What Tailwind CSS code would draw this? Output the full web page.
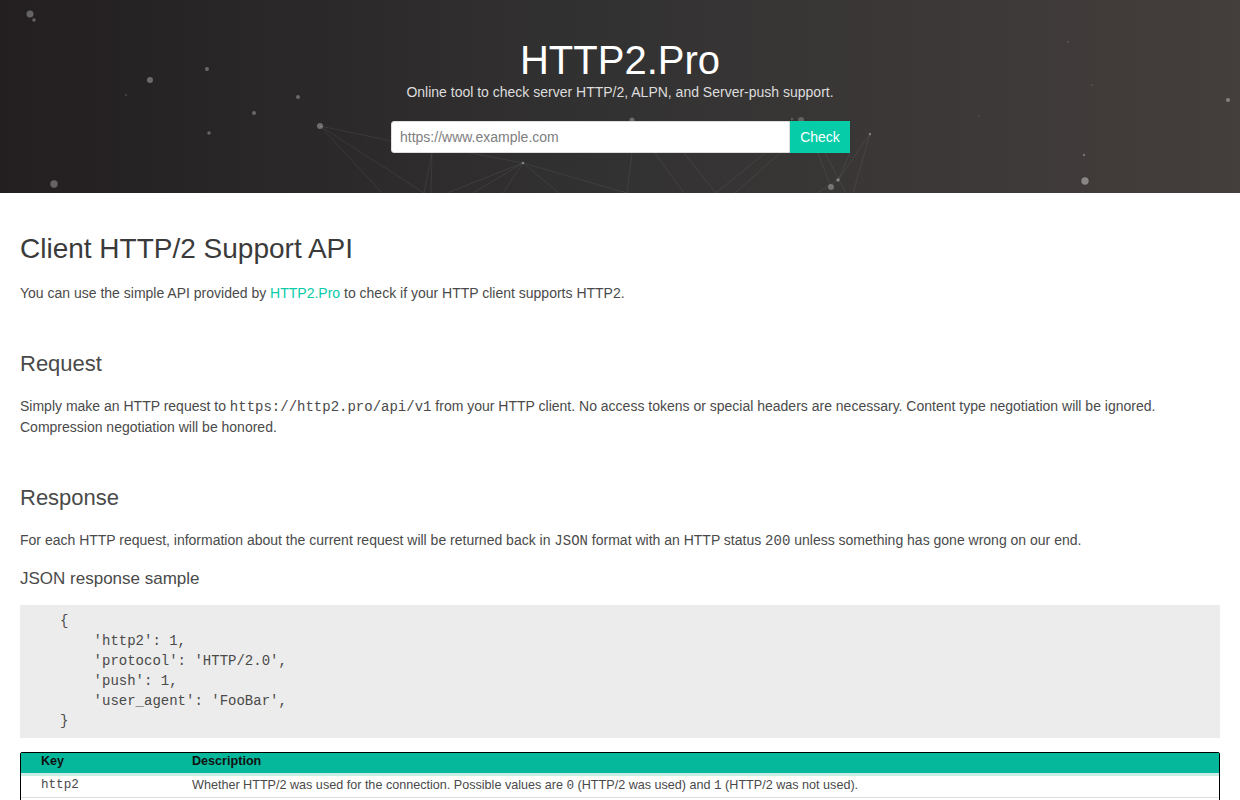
<!DOCTYPE html>
<html lang="en">
<head>
    <meta charset="UTF-8">
    <meta name="viewport" content="width=device-width, initial-scale=1.0">
    <title>HTTP2.Pro</title>
    <script src="https://cdn.jsdelivr.net/npm/@tailwindcss/browser@4"></script>
</head>
<body class="bg-white text-[#4a4a4a] font-['Liberation_Sans',Arial,sans-serif] text-[14px] leading-[21px] h-[800px] overflow-hidden">

    <!-- Header -->
    <header class="relative h-[193px] overflow-hidden bg-linear-to-r from-[#231f20] via-[#333232] to-[#443e3c]">
        <svg class="absolute inset-0 blur-[0.5px]" width="1240" height="193" viewBox="0 0 1240 193" fill="none">
            <g stroke="#fff" stroke-opacity="0.07" stroke-width="1">
                <path d="M320 126 L391 141"/>
                <path d="M320 126 L424 193"/>
                <path d="M320 126 L382 193"/>
                <path d="M432 153 L424 193"/>
                <path d="M432 153 L431 193"/>
                <path d="M470 153 L523 163"/>
                <path d="M523 163 L447 193"/>
                <path d="M523 163 L473 193"/>
                <path d="M523 163 L503 193"/>
                <path d="M523 163 L559 193"/>
                <path d="M523 163 L627 193"/>
                <path d="M632 153 L627 193"/>
                <path d="M655 153 L684 193"/>
                <path d="M684 153 L716 193"/>
                <path d="M765 153 L716 193"/>
                <path d="M780 153 L735 193"/>
                <path d="M818 153 L831 187"/>
                <path d="M838 180 L817 193"/>
                <path d="M870 134 L838 180"/>
                <path d="M870 134 L853 193"/>
                <path d="M825 153 L846 193"/>
                <path d="M850 153 L838 180"/>
            </g>
            <g fill="#fff">
                <circle cx="30" cy="14" r="3.5" fill-opacity="0.3"/>
                <circle cx="34" cy="20" r="1.7" fill-opacity="0.3"/>
                <circle cx="150" cy="80" r="3" fill-opacity="0.32"/>
                <circle cx="207" cy="69" r="2" fill-opacity="0.3"/>
                <circle cx="126" cy="95" r="0.8" fill-opacity="0.3"/>
                <circle cx="298" cy="97" r="2" fill-opacity="0.3"/>
                <circle cx="254" cy="113" r="2" fill-opacity="0.3"/>
                <circle cx="209" cy="133" r="1.7" fill-opacity="0.3"/>
                <circle cx="320" cy="126" r="3" fill-opacity="0.32"/>
                <circle cx="54" cy="184" r="3.7" fill-opacity="0.3"/>
                <circle cx="523" cy="163" r="1.3" fill-opacity="0.35"/>
                <circle cx="632" cy="120" r="2.5" fill-opacity="0.28"/>
                <circle cx="640" cy="94" r="1.5" fill-opacity="0.12"/>
                <circle cx="801" cy="120" r="3" fill-opacity="0.22"/>
                <circle cx="792" cy="119" r="1.2" fill-opacity="0.2"/>
                <circle cx="870" cy="134" r="1.2" fill-opacity="0.35"/>
                <circle cx="838" cy="180" r="1.7" fill-opacity="0.35"/>
                <circle cx="831" cy="187" r="3" fill-opacity="0.3"/>
                <circle cx="1068" cy="42" r="1" fill-opacity="0.14"/>
                <circle cx="1092" cy="85" r="1" fill-opacity="0.12"/>
                <circle cx="979" cy="116" r="1" fill-opacity="0.08"/>
                <circle cx="1228" cy="100" r="2" fill-opacity="0.35"/>
                <circle cx="1084" cy="155" r="1.2" fill-opacity="0.28"/>
                <circle cx="1085" cy="181" r="3.7" fill-opacity="0.38"/>
            </g>
        </svg>
        <div class="relative flex flex-col items-center pt-[37px]">
            <h1 class="text-[40px] leading-[46px] font-normal text-white">HTTP2.Pro</h1>
            <p class="text-[14px] leading-[21px] mt-[-1px] text-[#ddd]">Online tool to check server HTTP/2, ALPN, and Server-push support.</p>
            <form class="flex mt-[18px] ml-[1px]">
                <input type="text" placeholder="https://www.example.com" class="w-[399px] h-[32px] px-[8px] bg-white border border-[#ddd] rounded-l-[3px] text-[14px] text-[#444] placeholder:text-[#808080] outline-none">
                <button type="button" class="w-[60px] h-[32px] bg-[#06cca8] text-white text-[14px]">Check</button>
            </form>
        </div>
    </header>

    <!-- Content -->
    <main class="px-[20px]">
        <h2 class="text-[28px] leading-[33px] font-normal text-[#3a3a3a] mt-[39px]">Client HTTP/2 Support API</h2>
        <p class="mt-[18px]">You can use the simple API provided by <a href="#" class="text-[#06cca8]">HTTP2.Pro</a> to check if your HTTP client supports HTTP2.</p>

        <h3 class="text-[22px] leading-[24px] font-normal mt-[48px]">Request</h3>
        <p class="mt-[20px]">Simply make an HTTP request to <code class="font-['Liberation_Mono',monospace] text-[14px] leading-none">https://http2.pro/api/v1</code> from your HTTP client. No access tokens or special headers are necessary. Content type negotiation will be ignored. Compression negotiation will be honored.</p>

        <h3 class="text-[22px] leading-[24px] font-normal mt-[48px]">Response</h3>
        <p class="mt-[20px]">For each HTTP request, information about the current request will be returned back in <code class="font-['Liberation_Mono',monospace] text-[14px] leading-none">JSON</code> format with an HTTP status <code class="font-['Liberation_Mono',monospace] text-[14px] leading-none">200</code> unless something has gone wrong on our end.</p>
        <h4 class="text-[17px] leading-[20px] font-normal mt-[18px]">JSON response sample</h4>

        <pre class="mt-[16px] h-[133px] bg-[#ececec] pt-[6px] pl-[40px] font-['Liberation_Mono',monospace] text-[14px] leading-[20px] text-[#4a4a4a]">{
    'http2': 1,
    'protocol': 'HTTP/2.0',
    'push': 1,
    'user_agent': 'FooBar',
}</pre>

        <table class="mt-[14px] w-[1200px] border border-black rounded-[2px] border-separate border-spacing-0 text-[12.6px] leading-[18px] table-fixed">
            <thead>
                <tr class="bg-[#05b89b] text-[#111]">
                    <th class="w-[171px] pl-[20px] h-[23px] align-top leading-[17px] text-left font-bold border-b-[3px] border-[#c9ece5]">Key</th>
                    <th class="align-top leading-[17px] text-left font-bold border-b-[3px] border-[#c9ece5]">Description</th>
                </tr>
            </thead>
            <tbody>
                <tr>
                    <td class="pl-[20px] h-[22px] align-top border-b border-[#ddd] font-['Liberation_Mono',monospace]">http2</td>
                    <td class="align-top border-b border-[#ddd]">Whether HTTP/2 was used for the connection. Possible values are <code class="font-['Liberation_Mono',monospace]">0</code> (HTTP/2 was used) and <code class="font-['Liberation_Mono',monospace]">1</code> (HTTP/2 was not used).</td>
                </tr>
                <!-- rest of the table is below the fold -->
                <tr>
                    <td class="h-[22px]"></td>
                    <td></td>
                </tr>
            </tbody>
        </table>
    </main>
</body>
</html>
